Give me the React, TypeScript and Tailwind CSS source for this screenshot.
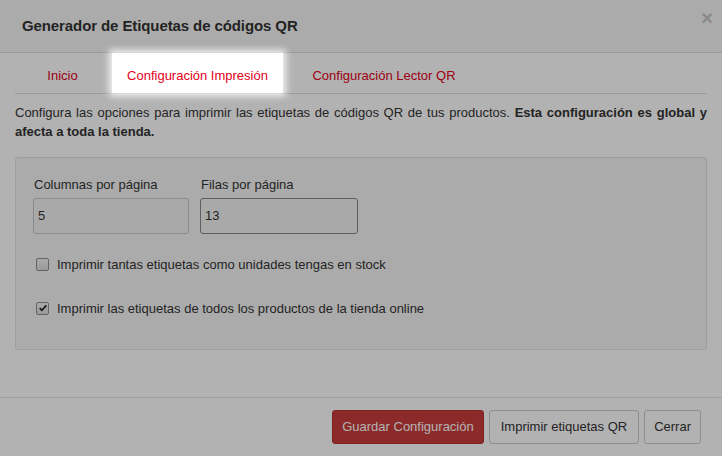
const font = "font-['Liberation_Sans',Arial,sans-serif]";

function CheckBox({ checked }: { checked?: boolean }) {
  return (
    <span className="flex h-[13px] w-[13px] shrink-0 items-center justify-center rounded-[2px] border border-[#8f8f8f] bg-gradient-to-b from-[#f4f4f4] to-[#dedede]">
      {checked && (
        <svg viewBox="0 0 12 12" className="h-[10px] w-[10px]">
          <path d="M2 6.2 L4.6 8.8 L10 2.8" fill="none" stroke="#222" strokeWidth="2" />
        </svg>
      )}
    </span>
  );
}

export default function App() {
  return (
    <div className={`relative h-[456px] w-[722px] overflow-hidden bg-white text-[13px] text-[#333] ${font}`}>
      {/* header */}
      <div className="flex h-[53px] items-center justify-between border-b border-[#dcdcdc] bg-[#f5f5f5] pl-[22px] pr-[9px]">
        <h4 className="text-[15px] font-bold tracking-[-0.1px] text-[#333]">Generador de Etiquetas de códigos QR</h4>
        <span className="-mt-[17px] text-[20px] font-bold leading-none text-[#c4c4c4]">×</span>
      </div>

      {/* tabs */}
      <div className="mx-[15px] flex h-[41px] border-b border-[#dddddd]">
        <div className="flex w-[95px] items-center justify-center pt-[5px] text-[#e2001a]">Inicio</div>
        <div className="relative z-20 ml-[2px] flex w-[171px] items-center justify-center bg-white pt-[5px] text-[#e2001a] shadow-[0_0_7px_3px_rgba(255,255,255,0.85)]">
          Configuración Impresión
        </div>
        <div className="ml-[2px] flex w-[198px] items-center justify-center pt-[5px] text-[#e2001a]">Configuración Lector QR</div>
      </div>

      {/* body */}
      <div className="px-[15px]">
        <p className="pt-[9px] text-justify leading-[19px]">
          Configura las opciones para imprimir las etiquetas de códigos QR de tus productos.{' '}
          <b>Esta configuración es global y afecta a toda la tienda.</b>
        </p>

        <div className="mt-[16px] h-[193px] rounded-[3px] border border-[#e3e3e3] bg-[#f5f5f5] pl-[17px] pt-[18px]">
          <div className="flex gap-[11px]">
            <div className="flex flex-col">
              <label className="ml-[1px] leading-[18px]">Columnas por página</label>
              <div className="mt-[4px] flex h-[36px] w-[156px] items-center rounded-[3px] border border-[#c8c8c8] bg-[#f2f2f2] px-[4px]">5</div>
            </div>
            <div className="flex flex-col">
              <label className="ml-[1px] leading-[18px]">Filas por página</label>
              <div className="mt-[4px] flex h-[36px] w-[158px] items-center rounded-[3px] border border-[#888] bg-[#f2f2f2] px-[4px]">13</div>
            </div>
          </div>

          <div className="mt-[21px] flex items-center gap-[8px] pl-[3px]">
            <CheckBox />
            <span>Imprimir tantas etiquetas como unidades tengas en stock</span>
          </div>
          <div className="mt-[24px] flex items-center gap-[8px] pl-[3px]">
            <CheckBox checked />
            <span>Imprimir las etiquetas de todos los productos de la tienda online</span>
          </div>
        </div>
      </div>

      {/* footer */}
      <div className="mt-[47px] flex justify-end gap-[5px] border-t border-[#e5e5e5] pr-[21px] pt-[12px]">
        <button className="h-[34px] rounded-[3px] border border-[#b83232] bg-[#c93c3c] px-[9px] text-white">Guardar Configuración</button>
        <button className="h-[34px] rounded-[3px] border border-[#ccc] bg-white px-[11px] text-[#333]">Imprimir etiquetas QR</button>
        <button className="h-[34px] rounded-[3px] border border-[#ccc] bg-white px-[9px] text-[#333]">Cerrar</button>
      </div>

      {/* tour overlay */}
      <div className="absolute inset-0 z-10 bg-black/30" />
    </div>
  );
}
